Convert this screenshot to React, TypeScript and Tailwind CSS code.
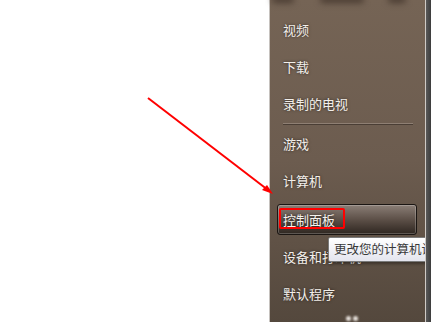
const font = { fontFamily: '"Noto Sans CJK SC", "Noto Sans", sans-serif' };

const MenuItem = ({ label }: { label: string }) => (
  <div className="h-[37px] flex items-center pl-[13px]">
    <span className="text-[13px] leading-none text-[#f3efea] [text-shadow:0_0_3px_rgba(0,0,0,0.6)]">{label}</span>
  </div>
);

const App = () => {
  return (
    <div className="relative w-[431px] h-[322px] overflow-hidden bg-white flex" style={font}>
      <div className="flex-1" />

      <div className="w-[162px] h-full flex">
        <div className="w-px h-full bg-[#c6c2be]" />
        <div className="relative w-[155px] h-full flex flex-col bg-gradient-to-b from-[#756455] via-[#6c5c4f] to-[#54483d]">
          {/* faint blurred bits of the items above */}
          <div className="h-[11px] relative">
            <div className="absolute left-[2px] top-[-4px] w-[22px] h-[7px] rounded-full bg-[#4a3c32] blur-[3px]" />
            <div className="absolute left-[50px] top-[-4px] w-[44px] h-[7px] rounded-full bg-[#4a3c32] blur-[3px]" />
            <div className="absolute left-[118px] top-[-4px] w-[18px] h-[7px] rounded-full bg-[#4a3c32] blur-[3px]" />
          </div>

          <MenuItem label="视频" />
          <MenuItem label="下载" />
          <MenuItem label="录制的电视" />

          <div className="h-[3px] pt-[1px] pl-[13px] pr-[12px]">
            <div className="h-px bg-[#8e7f73] shadow-[0_1px_0_#4a3e35]" />
          </div>

          <MenuItem label="游戏" />
          <MenuItem label="计算机" />

          <div className="h-[39px] pt-[5px] pl-[7px] pr-[8px]">
            <div className="relative h-[31px] flex items-center pl-[5px] rounded-[3px] border border-[#1b1613] bg-gradient-to-b from-[#8b7f77] via-[#5d5048] to-[#2f2721] shadow-[inset_0_0_0_1px_rgba(255,255,255,0.22)]">
              <span className="text-[13px] leading-none text-[#f6f2ee] [text-shadow:0_0_3px_rgba(0,0,0,0.6)]">控制面板</span>
              <div className="absolute left-px top-[3px] w-[66px] h-[21px] border-2 border-[#ff0000] rounded-[2px]" />
            </div>
          </div>

          <MenuItem label="设备和打印机" />
          <MenuItem label="默认程序" />

          <div className="absolute left-[76px] top-[316px] w-[5px] h-[5px] rounded-full bg-[#e8e2dc] blur-[1px]" />
          <div className="absolute left-[83px] top-[316px] w-[5px] h-[5px] rounded-full bg-[#e8e2dc] blur-[1px]" />
        </div>
        <div className="relative z-20 w-px h-full bg-[#cfcac5]" />
        <div className="relative z-20 w-[5px] h-full bg-gradient-to-r from-[#5a5a5a] to-[#3c3c3c]" />
      </div>

      {/* tooltip */}
      <div className="absolute z-10 left-[328px] top-[237px] h-[25px] w-[140px] flex items-center pl-[5px] rounded-[2px] border border-[#7a7a7a] bg-gradient-to-b from-white to-[#e4e5ee] shadow-[1px_2px_3px_rgba(0,0,0,0.35)]">
        <span className="text-[12.5px] leading-none text-[#3a3a3a] whitespace-nowrap">更改您的计算机设置</span>
      </div>

      {/* annotation arrow */}
      <svg className="absolute z-30 left-0 top-0 pointer-events-none" width="431" height="322">
        <line x1="148" y1="98" x2="268" y2="190" stroke="#ff0000" strokeWidth="2" />
        <polygon points="273,194 262,190 267,185" fill="#ff0000" />
      </svg>
    </div>
  );
};

export default App;
